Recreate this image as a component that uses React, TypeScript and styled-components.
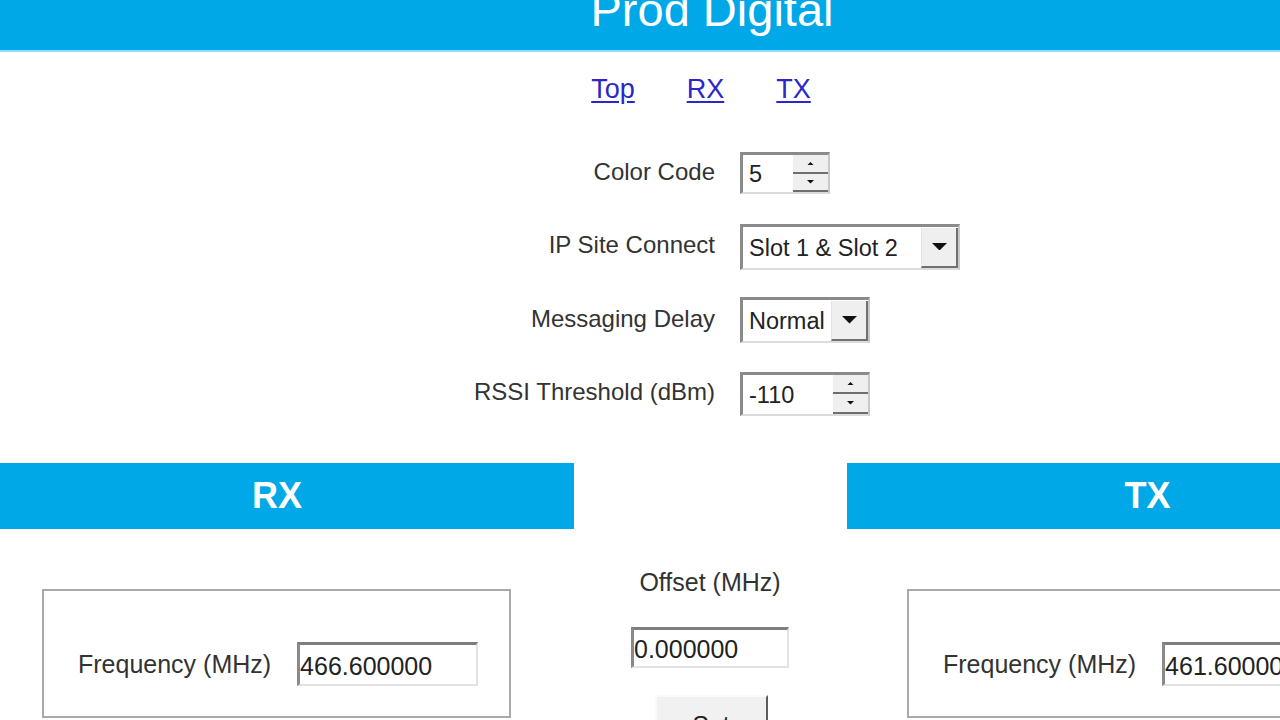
import React from "react";
import styled, { createGlobalStyle } from "styled-components";

const Global = createGlobalStyle`
  html, body {
    margin: 0;
    padding: 0;
    background: #ffffff;
    overflow: hidden;
  }
  body {
    font-family: "Liberation Sans", Arial, "DejaVu Sans", sans-serif;
    color: #333333;
  }
`;

const BRAND = "#00a8e8";

const Page = styled.div`
  width: 1424px;
  display: flex;
  flex-direction: column;
`;

const Header = styled.header`
  height: 50px;
  background: ${BRAND};
  border-bottom: 2px solid #8fdcf6;
  overflow: hidden;
  display: flex;
  justify-content: center;
`;

const Title = styled.h1`
  margin: -14px 0 0 0;
  font-size: 47px;
  line-height: 47px;
  font-weight: normal;
  color: #ffffff;
`;

const Nav = styled.nav`
  height: 75px;
  display: flex;
  align-items: center;
  justify-content: center;
  gap: 52px;
  padding-right: 22px;
`;

const NavLink = styled.a`
  font-size: 27px;
  color: #2a27c9;
  text-decoration: underline;
  text-underline-offset: 3px;
  cursor: pointer;
`;

const Form = styled.div`
  display: grid;
  grid-template-columns: 715px auto;
  grid-auto-rows: 48px;
  column-gap: 25px;
  row-gap: 25.5px;
  align-items: center;
  padding-top: 22px;
`;

const Label = styled.label`
  justify-self: end;
  font-size: 24px;
  color: #333333;
  white-space: nowrap;
  margin-top: -3px;
`;

const Field = styled.div<{ $w: number; $h: number }>`
  justify-self: start;
  display: flex;
  width: ${(p) => p.$w}px;
  height: ${(p) => p.$h}px;
  box-sizing: border-box;
  background: #ffffff;
  border-top: 3px solid #8a8a8a;
  border-left: 3px solid #8a8a8a;
  border-right: 2px solid #c8c8c8;
  border-bottom: 2px solid #dcdcdc;
`;

const FieldText = styled.span`
  flex: 1;
  display: flex;
  align-items: center;
  padding: 2px 0 0 6px;
  font-size: 23.5px;
  color: #222222;
  white-space: nowrap;
  overflow: hidden;
`;

const SpinColumn = styled.div`
  width: 35px;
  display: flex;
  flex-direction: column;
`;

const SpinButton = styled.div`
  flex: 1;
  display: flex;
  align-items: center;
  justify-content: center;
  background: #efefef;
  border-bottom: 2px solid #6e6e6e;
`;

const DropButton = styled.div`
  width: 34px;
  flex-shrink: 0;
  margin: 1px 0 0 0;
  display: flex;
  align-items: center;
  justify-content: center;
  background: #efefef;
  border-left: 1px solid #e2e2e2;
  border-right: 2px solid #707070;
  border-bottom: 2px solid #707070;
`;

const Arrow = ({ up, size }: { up?: boolean; size: number }) => (
  <svg width={size} height={size / 2} viewBox="0 0 10 5">
    <path d={up ? "M0 5 L5 0 L10 5 Z" : "M0 0 L10 0 L5 5 Z"} fill="#111" />
  </svg>
);

const Spinner = ({ value, w, h }: { value: string; w: number; h: number }) => (
  <Field $w={w} $h={h}>
    <FieldText>{value}</FieldText>
    <SpinColumn>
      <SpinButton>
        <Arrow up size={7} />
      </SpinButton>
      <SpinButton>
        <Arrow size={7} />
      </SpinButton>
    </SpinColumn>
  </Field>
);

const Select = ({ value, w, h }: { value: string; w: number; h: number }) => (
  <Field $w={w} $h={h}>
    <FieldText>{value}</FieldText>
    <DropButton>
      <Arrow size={15} />
    </DropButton>
  </Field>
);

const Bars = styled.div`
  display: grid;
  grid-template-columns: 574px 273px 1fr;
  margin-top: 45px;
`;

const SectionBar = styled.div<{ $col: number }>`
  grid-column: ${(p) => p.$col};
  height: 66px;
  background: ${BRAND};
  display: flex;
  align-items: center;
  justify-content: center;
  color: #ffffff;
  font-size: 36px;
  font-weight: bold;
  padding-right: ${(p) => (p.$col === 1 ? 20 : 0)}px;
  padding-left: ${(p) => (p.$col === 3 ? 24 : 0)}px;
`;

const Lower = styled.div`
  display: grid;
  grid-template-columns: 1fr 396px 1fr;
  align-items: start;
`;

const FreqBox = styled.div<{ $side: "left" | "right" }>`
  justify-self: ${(p) => (p.$side === "left" ? "end" : "start")};
  margin-top: 60px;
  width: 469px;
  height: 129px;
  box-sizing: border-box;
  border: 2px solid #a9a9a9;
  padding: 51px 0 0 34px;
  display: flex;
  align-items: flex-start;
  gap: 26px;
  margin-right: ${(p) => (p.$side === "left" ? 3 : 0)}px;
  margin-left: ${(p) => (p.$side === "right" ? -3 : 0)}px;
`;

const BoxLabel = styled.span`
  font-size: 25px;
  line-height: 44px;
  color: #333333;
  white-space: nowrap;
`;

const TextInput = styled.div<{ $w: number; $h: number }>`
  width: ${(p) => p.$w}px;
  height: ${(p) => p.$h}px;
  box-sizing: border-box;
  border-top: 3px solid #7e7e7e;
  border-left: 3px solid #8a8a8a;
  border-right: 2px solid #e2e2e2;
  border-bottom: 2px solid #e2e2e2;
  display: flex;
  align-items: center;
  padding: 4px 0 0 0;
  font-size: 25px;
  color: #222222;
  white-space: nowrap;
  overflow: hidden;
  flex-shrink: 0;
`;

const Center = styled.div`
  display: flex;
  flex-direction: column;
  align-items: center;
  padding-top: 38px;
  padding-right: 4px;
`;

const OffsetLabel = styled.span`
  font-size: 25px;
  line-height: 30px;
  color: #333333;
  margin-bottom: 30px;
`;

const Button = styled.button`
  margin-top: 27px;
  margin-left: 2px;
  width: 113px;
  height: 44px;
  box-sizing: border-box;
  background: #f1f1f1;
  border: none;
  border-top: 2px solid #fafafa;
  border-left: 2px solid #fafafa;
  border-right: 2px solid #5e5e5e;
  border-bottom: 2px solid #5e5e5e;
  font-family: "Liberation Sans", Arial, sans-serif;
  font-size: 25px;
  line-height: 28px;
  color: #222222;
  display: flex;
  align-items: flex-start;
  justify-content: center;
  padding: 14px 0 0 0;
`;

export default function App() {
  return (
    <Page>
      <Global />
      <Header>
        <Title>Prod Digital</Title>
      </Header>
      <Nav>
        <NavLink>Top</NavLink>
        <NavLink>RX</NavLink>
        <NavLink>TX</NavLink>
      </Nav>
      <Form>
        <Label>Color Code</Label>
        <Spinner value="5" w={90} h={42} />
        <Label>IP Site Connect</Label>
        <Select value="Slot 1 & Slot 2" w={220} h={46} />
        <Label>Messaging Delay</Label>
        <Select value="Normal" w={130} h={46} />
        <Label>RSSI Threshold (dBm)</Label>
        <Spinner value="-110" w={130} h={44} />
      </Form>
      <Bars>
        <SectionBar $col={1}>RX</SectionBar>
        <SectionBar $col={3}>TX</SectionBar>
      </Bars>
      <Lower>
        <FreqBox $side="left">
          <BoxLabel>Frequency (MHz)</BoxLabel>
          <TextInput $w={181} $h={44}>466.600000</TextInput>
        </FreqBox>
        <Center>
          <OffsetLabel>Offset (MHz)</OffsetLabel>
          <TextInput $w={158} $h={41}>0.000000</TextInput>
          <Button>Set</Button>
        </Center>
        <FreqBox $side="right">
          <BoxLabel>Frequency (MHz)</BoxLabel>
          <TextInput $w={181} $h={44}>461.600000</TextInput>
        </FreqBox>
      </Lower>
    </Page>
  );
}
